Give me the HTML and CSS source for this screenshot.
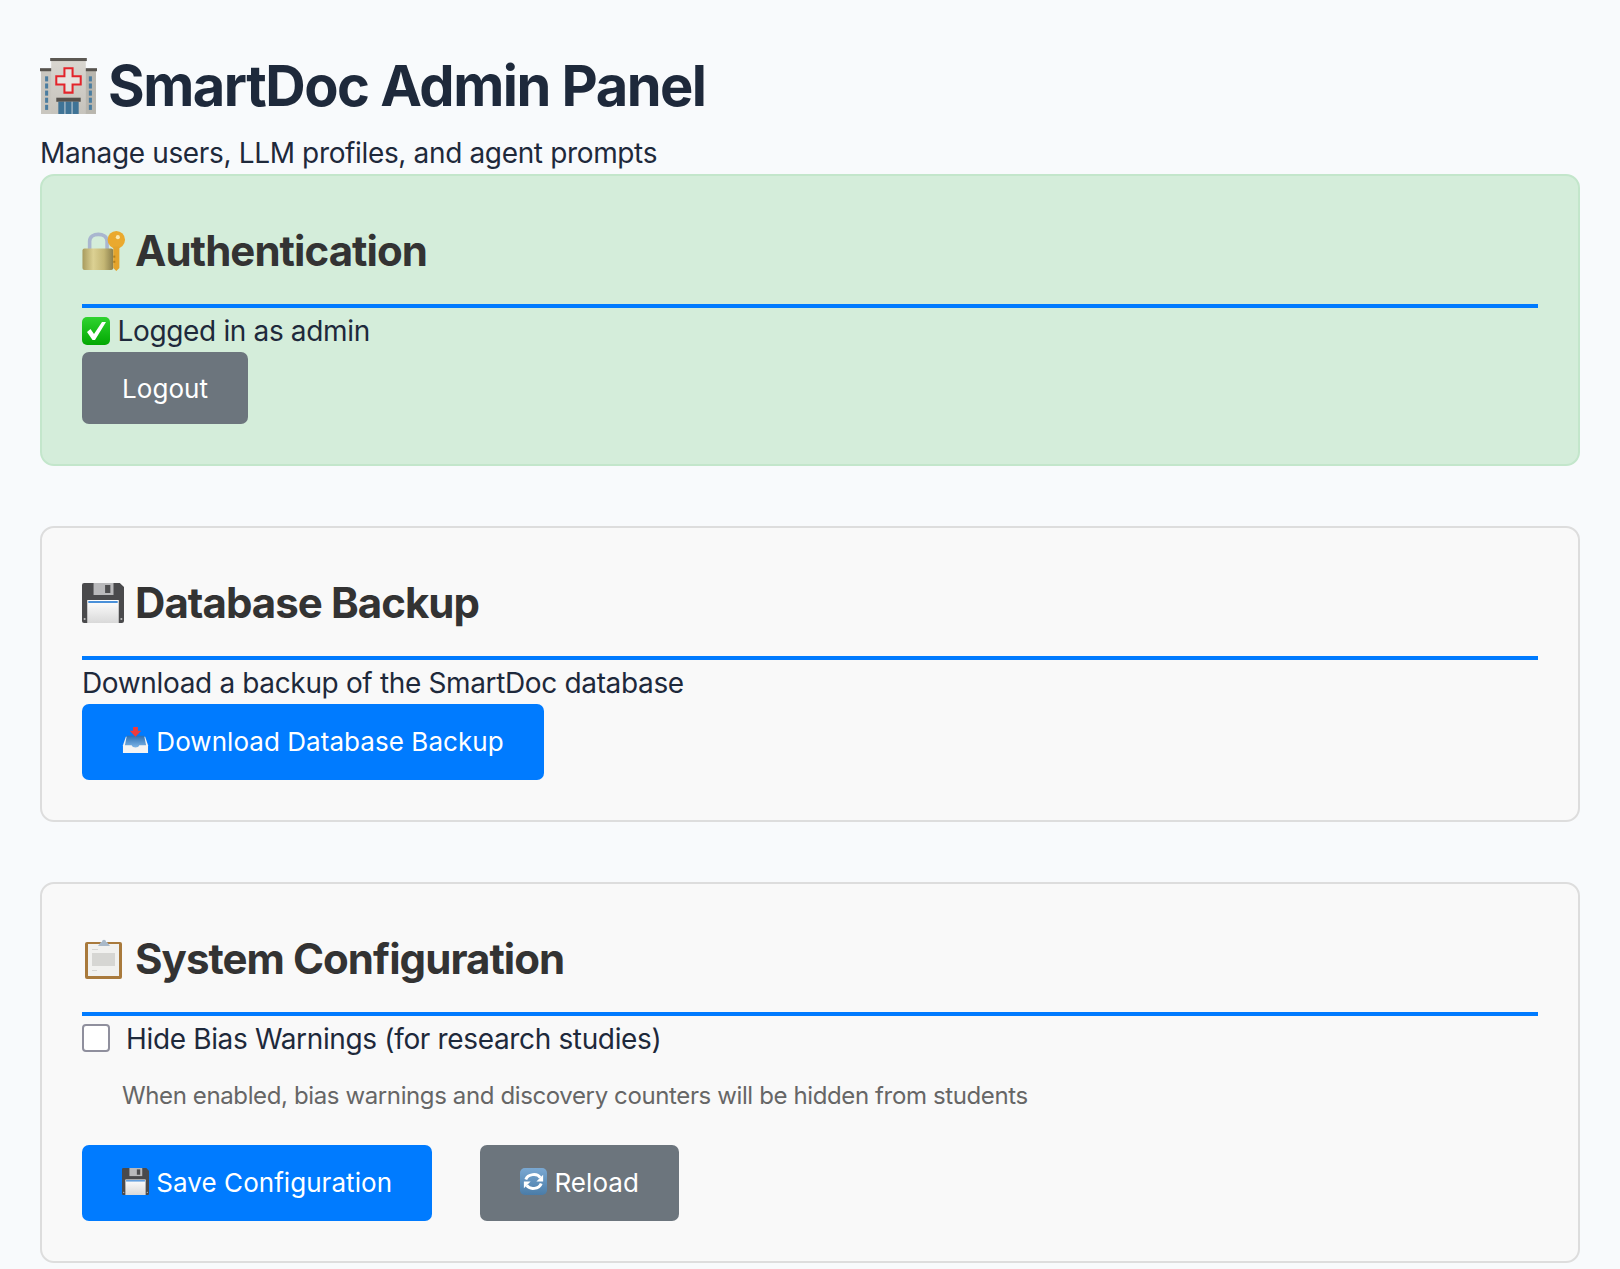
FILE: index.html
```html
<!DOCTYPE html>
<html>
  <head>
    <title>SmartDoc Admin Panel</title>
    <link rel="stylesheet" href="styles.css">
  </head>
  <body>
    <svg class="defs" width="0" height="0">
      <defs>
        <linearGradient id="brass" x1="0" y1="0" x2="1" y2="0">
          <stop offset="0" stop-color="#a89b5e"/>
          <stop offset="0.35" stop-color="#dcd193"/>
          <stop offset="0.7" stop-color="#c4b674"/>
          <stop offset="1" stop-color="#8a7e4c"/>
        </linearGradient>
        <linearGradient id="green" x1="0" y1="0" x2="0" y2="1">
          <stop offset="0" stop-color="#2fd32f"/>
          <stop offset="1" stop-color="#02a802"/>
        </linearGradient>
        <linearGradient id="label" x1="0" y1="0" x2="0" y2="1">
          <stop offset="0" stop-color="#ffffff"/>
          <stop offset="1" stop-color="#d9d9d9"/>
        </linearGradient>
        <linearGradient id="tray" x1="0" y1="0" x2="0" y2="1">
          <stop offset="0" stop-color="#2a6fb5"/>
          <stop offset="1" stop-color="#7db4e6"/>
        </linearGradient>
        <linearGradient id="reload" x1="0" y1="0" x2="0" y2="1">
          <stop offset="0" stop-color="#7aa8d2"/>
          <stop offset="1" stop-color="#4a7ca8"/>
        </linearGradient>
        <linearGradient id="tower" x1="0" y1="0" x2="0" y2="1">
          <stop offset="0" stop-color="#d9d6d0"/>
          <stop offset="1" stop-color="#c6c3bc"/>
        </linearGradient>
        <symbol id="floppy" viewBox="0 0 40 40" preserveAspectRatio="none">
          <path d="M2 0H36L40 4V38Q40 40 38 40H2Q0 40 0 38V2Q0 0 2 0Z" fill="#4a4a4c"/>
          <rect x="11" y="0" width="19" height="12" fill="#b9b9bb"/>
          <rect x="22" y="2" width="5" height="8" fill="#4d4d4f"/>
          <rect x="5" y="17" width="30" height="23" fill="url(#label)"/>
          <rect x="6" y="18" width="28" height="2" fill="#4a90d9"/>
          <circle cx="2.500" cy="36" r="1" fill="#bbb"/>
          <circle cx="37.500" cy="36" r="1" fill="#bbb"/>
        </symbol>
      </defs>
    </svg>
    <header class="page-head">
      <h1>
        <svg class="emoji-h1" viewBox="0 0 56 56">
          <rect x="1" y="11" width="11" height="44" fill="#c9c6bf"/>
          <rect x="44" y="11" width="11" height="44" fill="#b9b6ae"/>
          <rect x="0" y="10" width="12" height="3" fill="#57534e"/>
          <rect x="44" y="10" width="12" height="3" fill="#57534e"/>
          <rect x="11" y="1" width="34" height="54" fill="url(#tower)"/>
          <rect x="10" y="0" width="36" height="3" fill="#5c5853"/>
          <path d="M24 10H32V18H40V26H32V34H24V26H16V18H24Z" fill="#e6e4e0" stroke="#e3242b" stroke-width="2"/>
          <g fill="#4b7da0">
            <rect x="5" y="18" width="3" height="5"/>
            <rect x="5" y="25" width="3" height="5"/>
            <rect x="5" y="32" width="3" height="5"/>
            <rect x="5" y="39" width="3" height="5"/>
            <rect x="5" y="46" width="3" height="5"/>
            <rect x="48" y="18" width="3" height="5"/>
            <rect x="48" y="25" width="3" height="5"/>
            <rect x="48" y="32" width="3" height="5"/>
            <rect x="48" y="39" width="3" height="5"/>
            <rect x="48" y="46" width="3" height="5"/>
          </g>
          <rect x="16" y="39" width="24" height="4" fill="#55514c"/>
          <rect x="18" y="43" width="20" height="12" fill="#3f7396"/>
          <path d="M24.500 43V55M31.500 43V55" stroke="#c9d3d9" stroke-width="1"/>
        </svg>
        SmartDoc Admin Panel
      </h1>
      <p>Manage users, LLM profiles, and agent prompts</p>
    </header>

    <section class="card card-auth">
      <h2>
        <svg class="emoji-h2" viewBox="0 0 42 39">
          <path d="M7 20V10C7 1 24 1 24 10V20" fill="none" stroke="#a9b6cf" stroke-width="3.500"/>
          <rect x="0" y="17" width="30" height="21" rx="2" fill="url(#brass)"/>
          <circle cx="33" cy="8.500" r="8.500" fill="#eaa92e"/>
          <circle cx="34.500" cy="6" r="2" fill="#fbe9b0"/>
          <path d="M30 15H36V36L33 39L30 36Z" fill="#e4a32b"/>
          <g fill="#b5801c">
            <rect x="30" y="24" width="2" height="2"/>
            <rect x="30" y="29" width="2" height="2"/>
          </g>
        </svg>
        Authentication
      </h2>
      <p class="line">
        <svg class="emoji-line" viewBox="0 0 28 28">
          <rect width="28" height="28" rx="5" fill="url(#green)"/>
          <path d="M5 15L8.500 12L12 17L20 5H24L13 23H10.500Z" fill="#fff"/>
        </svg>
        Logged in as admin
      </p>
      <button class="btn btn-gray btn-logout">Logout</button>
    </section>

    <section class="card">
      <h2>
        <svg class="emoji-h2" viewBox="0 0 44 40"><use href="#floppy" width="42" height="40"/></svg>
        Database Backup
      </h2>
      <p class="line">Download a backup of the SmartDoc database</p>
      <button class="btn btn-blue">
        <svg class="emoji-btn" viewBox="0 0 28 28">
          <path d="M4 10H24L27 19V27H1V19Z" fill="#f4f4f4"/>
          <path d="M5 9H23L25 19H18C17 22 11 22 10 19H3Z" fill="url(#tray)"/>
          <path d="M11.500 0H16.500V4H20L14 10L8 4H11.500Z" fill="#ee3b3b"/>
        </svg>
        Download Database Backup
      </button>
    </section>

    <section class="card">
      <h2>
        <svg class="emoji-h2" viewBox="0 0 44 40">
          <rect x="3" y="3" width="37" height="37" rx="2" fill="#a97a3c"/>
          <rect x="6" y="5" width="31" height="32" fill="#f1f1ef"/>
          <g fill="#d6d6d3">
            <rect x="10" y="10" width="6" height="1"/>
            <rect x="10" y="14" width="23" height="13"/>
            <rect x="10" y="31" width="5" height="1"/>
          </g>
          <path d="M16 7L19 3H20C20 0 24 0 24 3H25L28 7Z" fill="#a9b9c9"/>
        </svg>
        System Configuration
      </h2>
      <label class="check-row">
        <input type="checkbox">
        <span>Hide Bias Warnings (for research studies)</span>
      </label>
      <p class="hint">When enabled, bias warnings and discovery counters will be hidden from students</p>
      <div class="btn-row">
        <button class="btn btn-blue">
          <svg class="emoji-btn" viewBox="0 0 40 40"><use href="#floppy" width="40" height="40"/></svg>
          Save Configuration
        </button>
        <button class="btn btn-gray">
          <svg class="emoji-btn" viewBox="0 0 28 28">
            <rect width="28" height="28" rx="5" fill="url(#reload)"/>
            <path d="M6 12C8 6 18 5 21 10" fill="none" stroke="#fff" stroke-width="3"/>
            <path d="M24 7V14H17Z" fill="#fff"/>
            <path d="M22 16C20 22 10 23 7 18" fill="none" stroke="#fff" stroke-width="3"/>
            <path d="M4 21V14H11Z" fill="#fff"/>
          </svg>
          Reload
        </button>
      </div>
    </section>
  </body>
</html>
```

FILE: styles.css
```css
/* Basic styling for the page */
body {
  font-family: Inter, "Noto Sans", sans-serif;
  font-size: 28px;
  letter-spacing: -0.35px;
  line-height: 1.2;
  color: #1e293b;
  background-color: #f8fafc;
  margin: 0;
  padding: 40px 40px 0;
}
.defs {
  position: absolute;
}
h1 {
  font-size: 56px;
  font-weight: 700;
  letter-spacing: -1.5px;
  line-height: 64px;
  margin: 14px 0 15px;
  display: flex;
  align-items: center;
  gap: 11px;
}
.page-head p {
  margin: 0 0 1px;
  line-height: 40px;
}
.card {
  background-color: #f9f9f9;
  border: 2px solid #ddd;
  border-radius: 14px;
  padding: 40px;
  margin-bottom: 60px;
}
.card-auth {
  background-color: #d4edda;
  border-color: #c3e6cb;
}
h2 {
  font-size: 42px;
  font-weight: 700;
  letter-spacing: -0.95px;
  line-height: 70px;
  color: #333;
  margin: 0 0 4px;
  padding-bottom: 18px;
  border-bottom: 4px solid #007bff;
  display: flex;
  align-items: center;
  gap: 9px;
}
.emoji-h1 {
  width: 57px;
  height: 57px;
}
.emoji-h2 {
  width: 44px;
  height: 40px;
}
.emoji-line {
  width: 28px;
  height: 28px;
  vertical-align: -4px;
}
.emoji-btn {
  width: 27px;
  height: 27px;
  vertical-align: -3px;
}
.line {
  margin: 0 0 2px;
  line-height: 38px;
}
.btn {
  font-family: inherit;
  font-size: 26px;
  letter-spacing: 0.05px;
  line-height: 32px;
  color: #fff;
  border: none;
  border-radius: 7px;
  padding: 22px 40px;
  display: block;
}
.btn-blue {
  background-color: #007bff;
}
.btn-gray {
  background-color: #6c757d;
}
.btn-logout {
  padding: 21px 40px 19px;
}
.check-row {
  display: flex;
  align-items: center;
  gap: 16px;
  line-height: 34px;
  height: 36px;
}
.check-row span {
  margin-top: 2px;
}
.check-row input {
  appearance: none;
  width: 28px;
  height: 28px;
  margin: 0;
  background-color: #fff;
  border: 2px solid #8f8f9d;
  border-radius: 4px;
}
.hint {
  font-size: 24px;
  letter-spacing: -0.38px;
  color: #666;
  line-height: 30px;
  margin: 25px 0 34px 40px;
}
.btn-row {
  display: flex;
  gap: 48px;
}
```
